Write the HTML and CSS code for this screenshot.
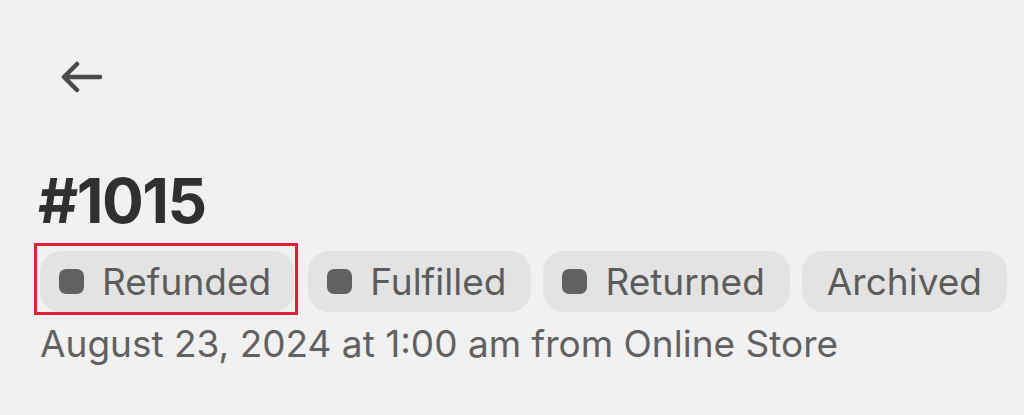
FILE: index.html
```html
<!DOCTYPE html>
<html lang="en">
<head>
  <meta charset="UTF-8">
  <meta name="viewport" content="width=device-width, initial-scale=1.0">
  <title>Order #1015</title>
  <link rel="stylesheet" href="styles.css">
</head>
<body>
  <div class="page">
    <button class="back" aria-label="Back">
      <svg width="44" height="34" viewBox="0 0 44 34" fill="none" stroke="#4a4a4a" stroke-width="4.5" stroke-linecap="round" stroke-linejoin="round">
        <path d="M39 17H4M16 4L3 17l13 13"/>
      </svg>
    </button>

    <h1 class="title">#1015</h1>

    <div class="badges">
      <span class="badge selected"><i class="dot"></i>Refunded</span>
      <span class="badge"><i class="dot"></i>Fulfilled</span>
      <span class="badge"><i class="dot"></i>Returned</span>
      <span class="badge plain">Archived</span>
    </div>

    <p class="meta">August 23, 2024 at 1:00 am from Online Store</p>
  </div>
</body>
</html>
```

FILE: styles.css
```css
body {
  margin: 0;
  background: #f1f1f1;
  font-family: Inter, "Noto Sans", sans-serif;
  color: #303030;
}
.page {
  display: flex;
  flex-direction: column;
  align-items: flex-start;
  padding: 60px 0 0 40px;
}
.back {
  display: flex;
  align-items: center;
  justify-content: center;
  padding: 0;
  margin-left: 20px;
  background: none;
  border: none;
  width: 46px;
  height: 34px;
}
.title {
  margin: 76px 0 0 -2px;
  font-size: 62px;
  font-weight: 700;
  letter-spacing: -1.5px;
  line-height: 1;
}
.badges {
  display: flex;
  gap: 12px;
  margin-top: 19px;
}
.badge {
  position: relative;
  display: flex;
  align-items: center;
  gap: 18px;
  height: 61px;
  padding: 0 25px 0 19px;
  background: #e3e3e3;
  border-radius: 21px;
  color: #5c5c5c;
  font-size: 37px;
  box-sizing: border-box;
}
.badge.plain {
  padding-left: 25px;
}
/* square highlight frame around the current status */
.badge.selected {
  padding-right: 23px;
  margin-right: 2px;
}
.badge.selected::after {
  content: "";
  position: absolute;
  top: -8px;
  bottom: -3px;
  left: -6px;
  right: -4px;
  border: 3px solid #e02030;
}
.dot {
  width: 25px;
  height: 25px;
  border-radius: 7px;
  background: #616161;
}
.meta {
  margin: 9px 0 0;
  font-size: 37px;
  color: #616161;
}
```
